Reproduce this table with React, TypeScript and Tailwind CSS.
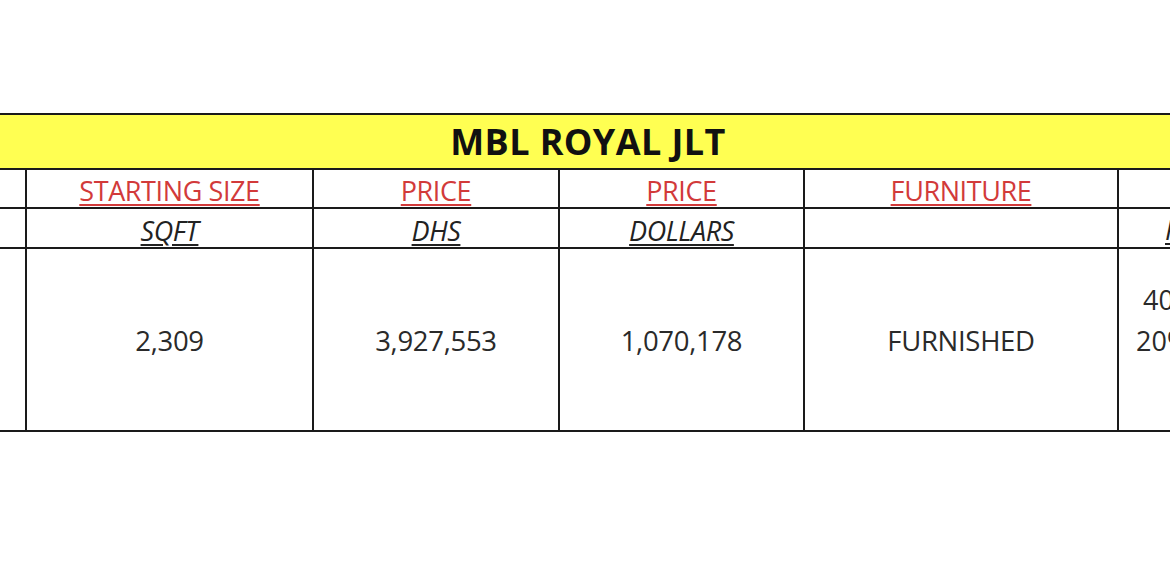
import React from "react";

const font = { fontFamily: '"Open Sans", "Liberation Sans", sans-serif' };

export default function App() {
  return (
    <div className="w-[1170px] h-[582px] overflow-hidden bg-white" style={font}>
      <div className="pt-[113px]">
        <div className="w-[1500px] grid grid-cols-[25px_285px_244px_243px_312px_300px] gap-[2px] bg-[#1a1a1a] py-[2px]">
          <div className="col-span-6 h-[53px] bg-[#ffff52] flex items-center">
            <div className="w-[1176px] text-center text-[36px] font-bold text-[#111] tracking-[0.4px] pt-[1px] leading-none">MBL ROYAL JLT</div>
          </div>

          <div className="h-[37px] bg-white" />
          <HeadCell>STARTING SIZE</HeadCell>
          <HeadCell>PRICE</HeadCell>
          <HeadCell>PRICE</HeadCell>
          <HeadCell>FURNITURE</HeadCell>
          <div className="h-[37px] bg-white" />

          <div className="h-[38px] bg-white" />
          <SubCell>SQFT</SubCell>
          <SubCell>DHS</SubCell>
          <SubCell>DOLLARS</SubCell>
          <SubCell>{""}</SubCell>
          <div className="h-[38px] bg-white flex items-center pl-[46px] pt-[5px] whitespace-nowrap text-[27px] italic underline underline-offset-[3px] text-[#222]">PAYMENT PLAN</div>

          <div className="h-[181px] bg-white" />
          <DataCell>2,309</DataCell>
          <DataCell>3,927,553</DataCell>
          <DataCell>1,070,178</DataCell>
          <DataCell>FURNISHED</DataCell>
          <div className="h-[181px] bg-white flex flex-col justify-center whitespace-nowrap text-[27px] leading-[41px] text-[#2a2a2a] pt-[2px]">
            <div className="pl-[24px]">40% DOWN PAYMENT</div>
            <div className="pl-[17px]">20% DURING CONSTRUCTION</div>
            <div className="pl-[60px]">40% ON HANDOVER</div>
          </div>
        </div>
      </div>
    </div>
  );
}

function HeadCell({ children }: { children: React.ReactNode }) {
  return (
    <div className="h-[37px] bg-white flex items-center justify-center text-[27px] leading-none text-[#d23a3a] underline decoration-[#d23a3a] underline-offset-[3px] pt-[3px] tracking-[-0.4px]">
      {children}
    </div>
  );
}

function SubCell({ children }: { children: React.ReactNode }) {
  return (
    <div className="h-[38px] bg-white flex items-center justify-center text-[27px] leading-none italic underline underline-offset-[3px] text-[#222] pt-[5px] tracking-[-0.4px]">
      {children}
    </div>
  );
}

function DataCell({ children }: { children: React.ReactNode }) {
  return (
    <div className="h-[181px] bg-white flex items-center justify-center text-[27.5px] text-[#2a2a2a] tracking-[-0.3px] pt-[3px]">
      {children}
    </div>
  );
}
